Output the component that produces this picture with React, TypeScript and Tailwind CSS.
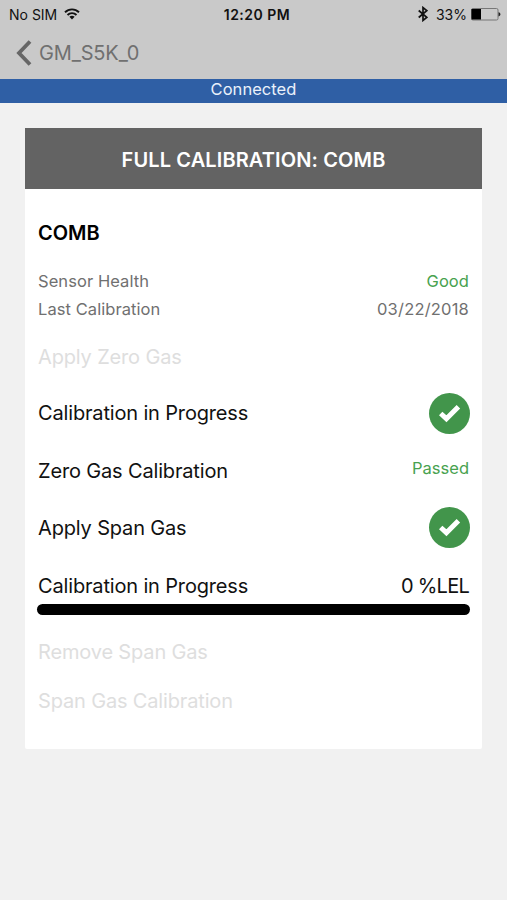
import clsx from 'clsx';

type StepStatus = 'disabled' | 'checked' | 'passed';

interface Step {
  label: string;
  status: StepStatus;
  className: string;
}

const finishedSteps: Step[] = [
  { label: 'Apply Zero Gas', status: 'disabled', className: 'h-14' },
  { label: 'Calibration in Progress', status: 'checked', className: 'h-14' },
  { label: 'Zero Gas Calibration', status: 'passed', className: 'h-[59px]' },
  { label: 'Apply Span Gas', status: 'checked', className: 'h-[55px]' },
];

const pendingSteps: Step[] = [
  { label: 'Remove Span Gas', status: 'disabled', className: 'h-[50px]' },
  { label: 'Span Gas Calibration', status: 'disabled', className: 'h-[48px]' },
];

const WifiIcon = () => (
  <svg className="ml-[7px] h-[12px] w-[16px]" viewBox="0 0 16 12" fill="none" stroke="#111" strokeWidth="1.9">
    <path d="M1 4.3C5 .4 11 .4 15 4.3" />
    <path d="M3.5 7C6 4.5 10 4.5 12.5 7" />
    <path d="M8 11.5 5.4 8.8C6.8 7.4 9.2 7.4 10.6 8.8Z" fill="#111" stroke="none" />
  </svg>
);

const BluetoothIcon = () => (
  <svg className="h-[16px] w-[10px]" viewBox="0 0 10 16" fill="none" stroke="#111" strokeWidth="1.7">
    <path d="M.7 4.5 8.8 11.3 5 14.4V1.6L8.8 4.7.7 11.5" />
  </svg>
);

const BatteryIcon = () => (
  <svg className="ml-[4px] h-[13px] w-[30px]" viewBox="0 0 30 13">
    <rect x=".5" y=".5" width="26.5" height="11.5" rx="1.5" fill="none" stroke="#777" />
    <path d="M.5 1h9.5v10.5H.5Z" fill="#000" />
    <path d="M27.5 4.2c2.6.6 2.6 3.6 0 4.2Z" fill="#222" />
  </svg>
);

const CheckBadge = () => (
  <svg className="-mr-px h-[41px] w-[41px]" viewBox="0 0 41 41">
    <circle cx="20.5" cy="20.5" r="20.5" fill="#42954b" />
    <path d="m11.7 20.5 5.7 5.2L29.4 13.8" fill="none" stroke="#fff" strokeWidth="5" />
  </svg>
);

const StepRow = ({ step }: { step: Step }) => (
  <div className={clsx('flex items-center justify-between', step.className)}>
    <span className={clsx('text-[20px] tracking-[-0.16px]', step.status === 'disabled' ? 'text-[#dedede]' : 'text-[#111]')}>
      {step.label}
    </span>
    {step.status === 'checked' && <CheckBadge />}
    {step.status === 'passed' && <span className="pb-[4px] text-[16.5px] text-[#48a24f]">Passed</span>}
  </div>
);

const StatusBar = () => (
  <div className="grid h-7 grid-cols-3 items-center pr-[6px] pl-[9px] text-[14px] text-[#111]">
    <div className="flex items-center">
      <span>No SIM</span>
      <WifiIcon />
    </div>
    <span className="pl-[4px] text-center font-semibold tracking-[0.5px]">12:20 PM</span>
    <div className="flex items-center justify-end">
      <BluetoothIcon />
      <span className="ml-[8px]">33%</span>
      <BatteryIcon />
    </div>
  </div>
);

export default function App() {
  return (
    <div className="min-h-[900px] bg-[#f1f1f1] font-['Inter',sans-serif] whitespace-nowrap">
      <header className="h-[79px] bg-[#c9c9c9]">
        <StatusBar />
        <button className="flex h-[49px] items-center pl-[16px] text-[20px] tracking-[-0.15px] text-[#707070]">
          <svg className="mr-[7px] h-[26px] w-[16px]" viewBox="0 0 16 26" fill="none" stroke="#666" strokeWidth="3.8">
            <path d="M14 1.5 3 13 14 24.5" />
          </svg>
          GM_S5K_0
        </button>
      </header>

      <div className="flex h-[24px] items-center justify-center bg-[#2f5fa5] pb-[3px] text-[16.5px] tracking-[0.05px] text-[#eaf1fb]">
        Connected
      </div>

      <main className="mx-[25px] mt-[25px] h-[621px] rounded-b-[2px] bg-white">
        <div className="flex h-[61px] items-center justify-center bg-[#636363] pt-[2px] text-[20px] font-semibold tracking-[0.12px] text-white">
          FULL CALIBRATION: COMB
        </div>

        <div className="px-[13px] pt-[29px]">
          <h2 className="h-[30px] text-[20px] leading-[30px] font-semibold text-black">COMB</h2>

          <div className="mt-[19px] text-[16.5px] leading-[28px] tracking-[0.07px] text-[#707070]">
            <div className="flex justify-between">
              <span>Sensor Health</span>
              <span className="text-[#48a24f]">Good</span>
            </div>
            <div className="flex justify-between">
              <span>Last Calibration</span>
              <span className="tracking-[0.2px]">03/22/2018</span>
            </div>
          </div>

          <div className="mt-[6px]">
            {finishedSteps.map(step => (
              <StepRow key={step.label} step={step} />
            ))}
          </div>

          {/* Span reading with its progress bar */}
          <div className="h-[72px] pt-[16px]">
            <div className="flex h-[30px] items-center justify-between text-[20px] tracking-[-0.16px] text-[#111]">
              <span>Calibration in Progress</span>
              <span className="tracking-[-0.75px]">0 %LEL</span>
            </div>
            <div className="-mr-px mt-[3px] -ml-px h-[11px] rounded-full bg-black" />
          </div>

          {pendingSteps.map(step => (
            <StepRow key={step.label} step={step} />
          ))}
        </div>
      </main>
    </div>
  );
}
